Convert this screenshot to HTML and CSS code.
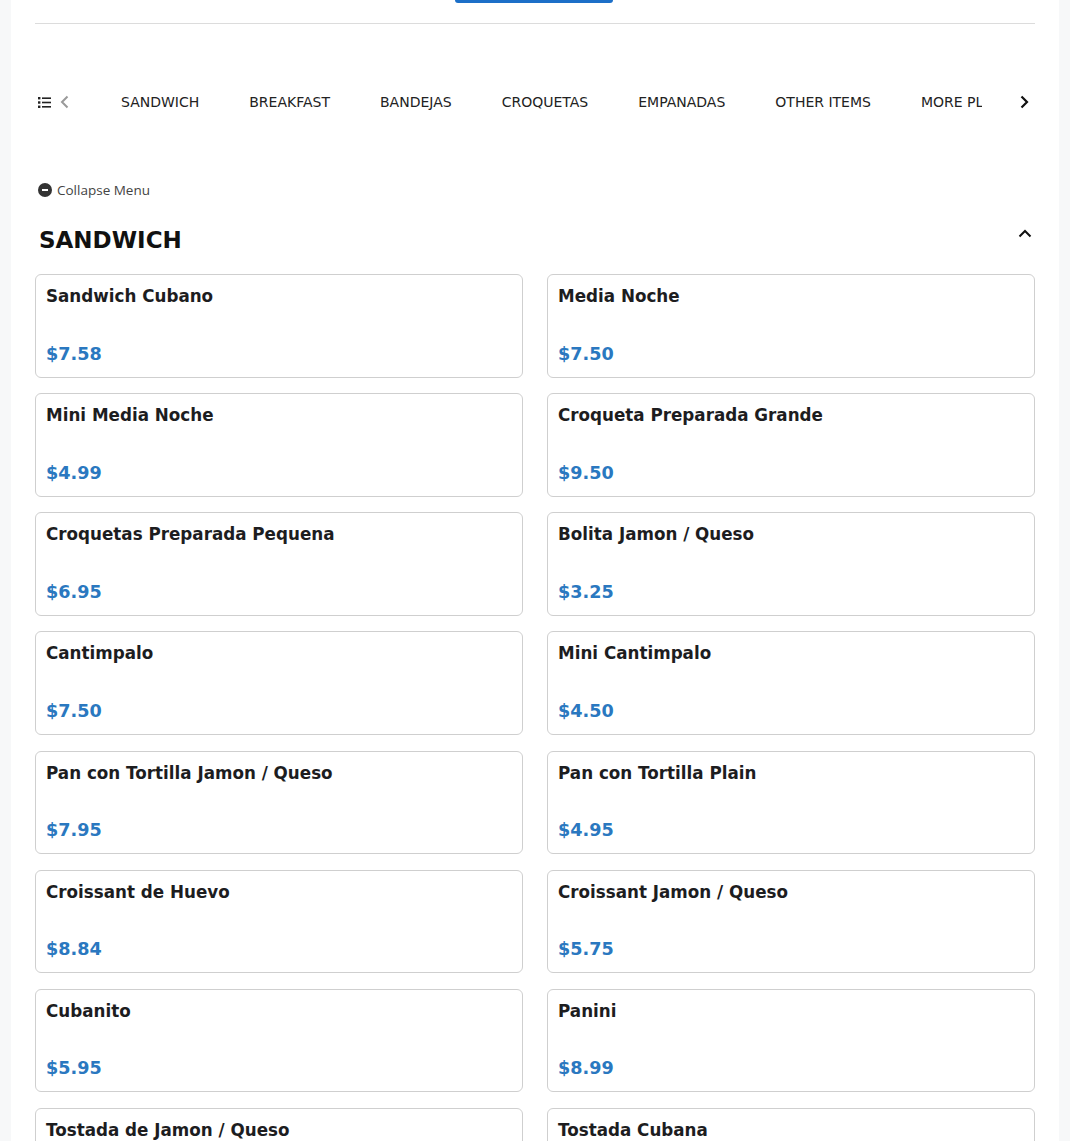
FILE: index.html
```html
<!DOCTYPE html>
<html>
<head>
<meta charset="utf-8">
<link rel="stylesheet" href="styles.css">
</head>
<body>
<div class="page">
  <div class="top"><div class="top-btn"></div></div>

  <div class="nav">
    <span class="nav-list">
      <svg width="13" height="11" viewBox="0 0 13 11"><rect x="0" y="0" width="2.4" height="2.4" fill="#222"/><rect x="4" y="0.4" width="9" height="1.6" fill="#222"/><rect x="0" y="4.3" width="2.4" height="2.4" fill="#222"/><rect x="4" y="4.7" width="9" height="1.6" fill="#222"/><rect x="0" y="8.6" width="2.4" height="2.4" fill="#222"/><rect x="4" y="9" width="9" height="1.6" fill="#222"/></svg>
    </span>
    <span class="nav-prev">
      <svg width="9" height="14" viewBox="0 0 9 14"><path d="M7.5 1.5 L2 7 L7.5 12.5" fill="none" stroke="#9a9a9a" stroke-width="2"/></svg>
    </span>
    <div class="nav-scroll">
      <div class="nav-items">
        <span class="nav-item">SANDWICH</span>
        <span class="nav-item">BREAKFAST</span>
        <span class="nav-item">BANDEJAS</span>
        <span class="nav-item">CROQUETAS</span>
        <span class="nav-item">EMPANADAS</span>
        <span class="nav-item">OTHER ITEMS</span>
        <span class="nav-item">MORE PLATES</span>
      </div>
    </div>
    <span class="nav-next">
      <svg width="9" height="14" viewBox="0 0 9 14"><path d="M1.5 1.5 L7 7 L1.5 12.5" fill="none" stroke="#111" stroke-width="2.2"/></svg>
    </span>
  </div>

  <div class="collapse">
    <span class="collapse-icon"></span>
    <span>Collapse Menu</span>
  </div>

  <div class="section-head">
    <h2 class="section-title">SANDWICH</h2>
    <svg class="section-toggle" width="14" height="9" viewBox="0 0 14 9"><path d="M1.5 7.5 L7 2 L12.5 7.5" fill="none" stroke="#111" stroke-width="2"/></svg>
  </div>

  <div class="grid">
    <div class="card"><div class="card-title">Sandwich Cubano</div><div class="card-price">$7.58</div></div>
    <div class="card"><div class="card-title">Media Noche</div><div class="card-price">$7.50</div></div>
    <div class="card"><div class="card-title">Mini Media Noche</div><div class="card-price">$4.99</div></div>
    <div class="card"><div class="card-title">Croqueta Preparada Grande</div><div class="card-price">$9.50</div></div>
    <div class="card"><div class="card-title">Croquetas Preparada Pequena</div><div class="card-price">$6.95</div></div>
    <div class="card"><div class="card-title">Bolita Jamon / Queso</div><div class="card-price">$3.25</div></div>
    <div class="card"><div class="card-title">Cantimpalo</div><div class="card-price">$7.50</div></div>
    <div class="card"><div class="card-title">Mini Cantimpalo</div><div class="card-price">$4.50</div></div>
    <div class="card"><div class="card-title">Pan con Tortilla Jamon / Queso</div><div class="card-price">$7.95</div></div>
    <div class="card"><div class="card-title">Pan con Tortilla Plain</div><div class="card-price">$4.95</div></div>
    <div class="card"><div class="card-title">Croissant de Huevo</div><div class="card-price">$8.84</div></div>
    <div class="card"><div class="card-title">Croissant Jamon / Queso</div><div class="card-price">$5.75</div></div>
    <div class="card"><div class="card-title">Cubanito</div><div class="card-price">$5.95</div></div>
    <div class="card"><div class="card-title">Panini</div><div class="card-price">$8.99</div></div>
    <div class="card"><div class="card-title">Tostada de Jamon / Queso</div><div class="card-price">$3.50</div></div>
    <div class="card"><div class="card-title">Tostada Cubana</div><div class="card-price">$3.25</div></div>
  </div>
</div>
</body>
</html>
```

FILE: styles.css
```css
html, body {
  margin: 0;
  padding: 0;
}
body {
  background: #f7f8f9;
  font-family: "DejaVu Sans", sans-serif;
  color: #1d1d1f;
}
.page {
  width: 1000px;
  margin-left: 11px;
  padding: 0 24px;
  background: #fff;
  min-height: 1141px;
  overflow: hidden;
}
.top {
  height: 23px;
  border-bottom: 1px solid #dcdcdc;
  display: flex;
  justify-content: center;
}
.top-btn {
  width: 158px;
  height: 3px;
  margin-left: -2px;
  background: #1c6fc8;
  border-radius: 0 0 4px 4px;
}
.nav {
  margin-top: 58px;
  height: 40px;
  display: flex;
  align-items: center;
}
.nav-list {
  display: flex;
  margin-left: 3px;
}
.nav-prev {
  display: flex;
  margin-left: 9px;
}
.nav-scroll {
  flex: 0 0 911px;
  margin-left: 2px;
  overflow: hidden;
}
.nav-items {
  display: flex;
  gap: 50px;
  padding-left: 50px;
  white-space: nowrap;
}
.nav-item {
  font-size: 14px;
  color: #222;
  line-height: 20px;
}
.nav-next {
  display: flex;
  margin-left: auto;
  margin-right: 6px;
}
.collapse {
  margin-top: 59px;
  display: flex;
  align-items: center;
  gap: 5px;
  font-family: "Open Sans", sans-serif;
  font-size: 13.5px;
  color: #444;
  height: 18px;
  padding-left: 3px;
}
.collapse-icon {
  width: 14px;
  height: 14px;
  border-radius: 50%;
  background: #333;
  position: relative;
}
.collapse-icon::after {
  content: "";
  position: absolute;
  left: 4px;
  top: 6px;
  width: 6px;
  height: 2px;
  background: #fff;
}
.section-head {
  margin-top: 26px;
  height: 30px;
  display: flex;
  align-items: center;
  justify-content: space-between;
}
.section-title {
  margin: 0;
  padding-left: 4px;
  font-size: 23px;
  font-weight: bold;
  color: #111;
  line-height: 30px;
}
.section-toggle {
  margin-right: 3px;
  margin-top: -14px;
}
.grid {
  margin-top: 19px;
  display: grid;
  grid-template-columns: 1fr 1fr;
  column-gap: 24px;
  row-gap: 15.55px;
}
.card {
  height: 103.6px;
  box-sizing: border-box;
  border: 1px solid #cfcfcf;
  border-radius: 6px;
  padding: 10px;
  display: flex;
  flex-direction: column;
  justify-content: space-between;
}
.card-title {
  font-size: 16.75px;
  font-weight: bold;
  line-height: 22px;
  color: #1d1d1f;
}
.card-price {
  font-size: 17.6px;
  font-weight: bold;
  line-height: 24px;
  margin-bottom: 1px;
  color: #2a78c0;
}
```
